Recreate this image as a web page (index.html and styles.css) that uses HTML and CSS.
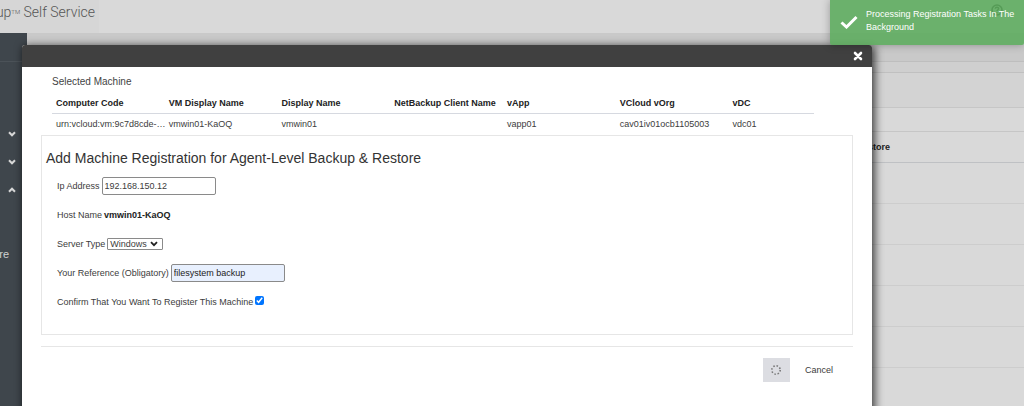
FILE: index.html
```html
<!DOCTYPE html>
<html lang="en">
<head>
<meta charset="utf-8">
<title>Self Service</title>
<meta name="viewport" content="width=device-width, initial-scale=1">
<link rel="stylesheet" href="styles.css">
</head>
<body>
<header class="topbar">
  <div class="brand"><span>up<span class="tm">TM</span> Self Service</span></div>
  <span class="help"><svg viewBox="0 0 12 12" width="12" height="12" aria-label="Help"><circle cx="6" cy="6" r="5" fill="none" stroke="currentColor" stroke-width="1.6"/><path d="M4.2 4.8C4.4 2.7 7.8 2.8 7.6 4.8C7.5 5.8 6 5.8 6 7.1M6 8.2V9.5" fill="none" stroke="currentColor" stroke-width="1.5"/></svg></span>
</header>
<div class="page">
  <nav class="sidebar">
    <div class="side-head"></div>
    <div class="side-menu">
      <svg class="caret" viewBox="0 0 8 6"><path d="M1 1.3L4 4.3L7 1.3"/></svg>
      <svg class="caret" viewBox="0 0 8 6"><path d="M1 1.3L4 4.3L7 1.3"/></svg>
      <svg class="caret" viewBox="0 0 8 6"><path d="M1 4.7L4 1.7L7 4.7"/></svg>
    </div>
    <div class="side-item"><span>re</span></div>
  </nav>
  <main class="backdrop">
    <div class="strip"></div>
    <div class="tabs"></div>
    <div class="tools"></div>
    <div class="filter"></div>
    <div class="grid-head"><b>Restore</b></div>
    <div class="grid-row"></div>
    <div class="grid-row"></div>
    <div class="grid-row"></div>
    <div class="grid-row"></div>
    <div class="grid-row"></div>
    <div class="grid-row"></div>
  </main>
</div>

<section class="modal" role="dialog" aria-label="Add Machine Registration">
  <div class="modal-head">
    <button class="close" type="button" aria-label="Close"><svg viewBox="0 0 10 10" width="10" height="10"><path d="M2 2L8 8M8 2L2 8"/></svg></button>
  </div>
  <div class="modal-body">
    <div class="selected">
      <p class="caption">Selected Machine</p>
      <table class="machines">
        <colgroup><col class="wide" span="6"><col></colgroup>
        <thead><tr><th>Computer Code</th><th>VM Display Name</th><th>Display Name</th><th>NetBackup Client Name</th><th>vApp</th><th>VCloud vOrg</th><th>vDC</th></tr></thead>
        <tbody><tr><td>urn:vcloud:vm:9c7d8cde-…</td><td>vmwin01-KaOQ</td><td>vmwin01</td><td></td><td>vapp01</td><td>cav01iv01ocb1105003</td><td>vdc01</td></tr></tbody>
      </table>
    </div>
    <form class="panel">
      <h1>Add Machine Registration for Agent-Level Backup &amp; Restore</h1>
      <div class="field"><label for="ip">Ip Address</label><input class="text" id="ip" type="text" value="192.168.150.12"></div>
      <div class="field"><span>Host Name</span><b>vmwin01-KaOQ</b></div>
      <div class="field"><label for="server">Server Type</label><span class="pick"><select id="server"><option>Windows</option></select><svg viewBox="0 0 8 6" width="8" height="6"><path d="M1 1.2L4 4.2L7 1.2"/></svg></span></div>
      <div class="field"><label for="ref">Your Reference (Obligatory)</label><input class="text filled" id="ref" type="text" value="filesystem backup"></div>
      <div class="field"><label for="confirm">Confirm That You Want To Register This Machine</label><input class="tick" id="confirm" type="checkbox" checked></div>
    </form>
    <div class="actions">
      <button class="busy" type="button" aria-label="Saving"><svg viewBox="0 0 12 12" width="12" height="12"><circle cx="6" cy="6" r="4.2"/></svg></button>
      <button class="cancel" type="button">Cancel</button>
    </div>
  </div>
</section>

<div class="toast" role="status">
  <svg viewBox="0 0 18 14" width="18" height="14"><path d="M1.5 7.5L6.5 12L16.5 2"/></svg>
  <p>Processing Registration Tasks In The Background</p>
</div>
</body>
</html>
```
FILE: styles.css
```css
* { box-sizing: border-box; }
body {
  margin: 0;
  height: 100vh;
  display: flex;
  flex-direction: column;
  overflow: hidden;
  position: relative;
  background: #d9d9d9;
  color: #3c3c3c;
  font: 9px/12px "Liberation Sans", Arial, sans-serif;
}
button, input, select { font: inherit; color: inherit; }
p, h1 { margin: 0; }

.topbar {
  flex: none;
  height: 33px;
  display: flex;
  justify-content: space-between;
  padding-right: 21px;
}
.brand {
  width: 99px;
  padding: 2px 4px 0 0;
  display: flex;
  justify-content: flex-end;
  background: #d6d6d6;
  color: #555;
  font: 300 14px/19px Roboto, sans-serif;
  white-space: nowrap;
}
.tm { font-size: 6px; vertical-align: 3px; }
.help { color: #333; padding-top: 4px; }

.page { flex: 1; display: flex; min-height: 0; }
.sidebar {
  width: 27px;
  flex: none;
  overflow: hidden;
  background: #3f464c;
  color: #d0d0d0;
}
.side-head { height: 29px; border-bottom: 1px solid #4b5258; }
.side-menu {
  display: flex;
  flex-direction: column;
  gap: 22px;
  padding: 69px 0 0 8px;
}
.caret { width: 8px; height: 6px; fill: none; stroke: #d8d8d8; stroke-width: 2; }
.side-item {
  width: 9px;
  margin-top: 53px;
  display: flex;
  justify-content: flex-end;
  font-size: 11px;
  line-height: 16px;
}

.backdrop { flex: 1; }
.strip { height: 29px; background: #c9c9c9; border-bottom: 1px solid #bebebe; }
.tabs { height: 11px; background: #cfcfcf; border-bottom: 1px solid #c0c0c0; }
.tools { height: 35px; background: #d3d3d3; border-bottom: 1px solid #c6c6c6; }
.filter { height: 24px; border-bottom: 1px solid #c6c6c6; }
.grid-head {
  height: 31px;
  padding: 9px 134px 0 0;
  border-bottom: 1px solid #bfc1c4;
  text-align: right;
  color: #222;
}
.grid-row { height: 41px; border-bottom: 1px solid #cdcdcd; }

.modal {
  position: absolute;
  top: 45px;
  bottom: -20px;
  left: 22px;
  right: 152px;
  background: #fff;
  border-radius: 3px 3px 0 0;
  box-shadow: 2px 2px 8px 1px rgba(0, 0, 0, .7);
}
.modal-head {
  height: 22px;
  padding-right: 9px;
  display: flex;
  align-items: center;
  justify-content: flex-end;
  background: #404040;
  border-radius: 3px 3px 0 0;
}
.close { width: 10px; height: 10px; padding: 0; border: 0; background: none; display: flex; }
.close path { stroke: #fff; stroke-width: 2.6; stroke-linecap: round; }
.modal-body { padding: 9px 19px 0; }
.selected { padding: 0 39px 0 11px; }
.caption { font-size: 10px; line-height: 12px; color: #444; }
.machines {
  width: 100%;
  margin-top: 5px;
  table-layout: fixed;
  border-collapse: collapse;
}
.wide { width: 14.8%; }
.machines th, .machines td {
  padding: 4px 0 4px 4px;
  text-align: left;
  white-space: nowrap;
}
.machines th { color: #222; border-bottom: 1px solid #d6d9e0; }
.machines td { padding-bottom: 5px; }

.panel {
  border: 1px solid #e6e6e6;
  height: 200px;
  padding: 12px 4px 0;
}
.panel h1 {
  margin-bottom: 3px;
  font-size: 14px;
  line-height: 20px;
  font-weight: 400;
  color: #333;
}
.field {
  display: flex;
  align-items: center;
  gap: 2px;
  height: 29px;
  padding-left: 11px;
}
.field b { color: #222; }
.text {
  width: 114px;
  height: 18px;
  padding: 0 2px;
  border: 1px solid #8a8a8a;
  border-radius: 2px;
  background: #fff;
}
.filled { background: #e8f0fe; color: #222; }
.pick { position: relative; display: flex; }
.pick select {
  appearance: none;
  width: 56px;
  height: 12px;
  padding: 0 2px;
  border: 1px solid #8a8a8a;
  border-radius: 1px;
  background: #fff;
  line-height: 10px;
}
.pick svg { position: absolute; right: 5px; top: 3px; pointer-events: none; }
.pick path { fill: none; stroke: #222; stroke-width: 1.8; }
.tick { width: 9px; height: 9px; margin: 0 0 3px; accent-color: #0075ff; }

.actions {
  margin-top: 11px;
  padding: 11px 20px 0 0;
  border-top: 1px solid #e6e6e6;
  display: flex;
  justify-content: flex-end;
  gap: 15px;
}
.actions button { border: 0; height: 24px; padding: 0; }
.actions .busy {
  width: 27px;
  display: flex;
  align-items: center;
  justify-content: center;
  background: #dcdde2;
}
.busy circle { fill: none; stroke: #777; stroke-width: 1.6; stroke-dasharray: 1.5 1.8; }
.actions .cancel { background: none; }

.toast {
  position: absolute;
  top: 0;
  right: 0;
  width: 194px;
  min-height: 45px;
  padding: 8px 4px 0 10px;
  display: flex;
  gap: 8px;
  background: rgba(91, 171, 92, .87);
  border-radius: 0 0 2px 2px;
  box-shadow: 0 0 8px rgba(0, 0, 0, .3);
  color: #fff;
}
.toast svg { flex: none; margin-top: 7px; fill: none; stroke: #fff; stroke-width: 3; }
.toast p { line-height: 13px; }
```
